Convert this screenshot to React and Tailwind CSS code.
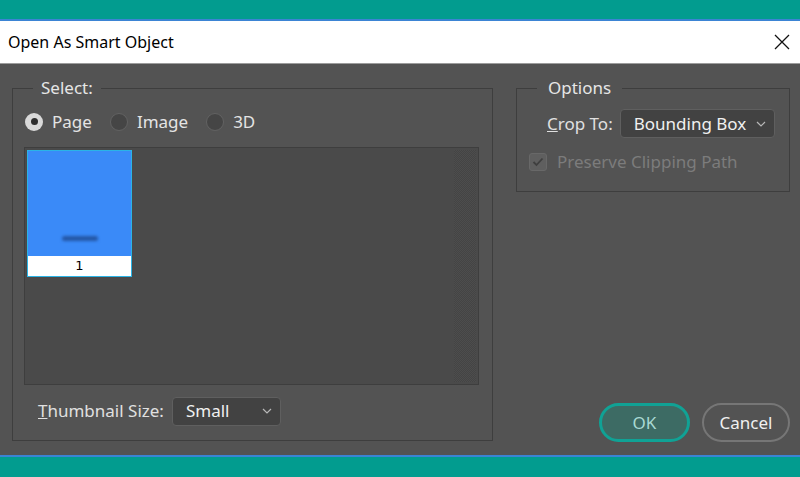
import React from 'react';

const font = { fontFamily: '"Noto Sans", "Open Sans", sans-serif' };

const Chevron = () => (
  <svg width="10" height="6" viewBox="0 0 10 6" className="text-[#b8b8b8]">
    <path d="M1 1l4 4 4-4" fill="none" stroke="currentColor" strokeWidth="1.2" />
  </svg>
);

const Radio = ({ checked, label }) => (
  <label className="flex items-center gap-[9px]">
    {checked ? (
      <span className="w-[18px] h-[18px] rounded-full bg-[#d9d9d9] flex items-center justify-center">
        <span className="w-[7px] h-[7px] rounded-full bg-[#2e2e2e]" />
      </span>
    ) : (
      <span className="w-[18px] h-[18px] rounded-full bg-[#454545] border border-[#626262]" />
    )}
    <span className="text-[17px] text-[#e4e4e4]">{label}</span>
  </label>
);

const Select = ({ value, className }) => (
  <div className={`h-[29px] flex items-center justify-between rounded-[4px] bg-[#424242] border border-[#5f5f5f] pl-[13px] pr-[8px] ${className}`}>
    <span className="text-[17px] text-[#f0f0f0]">{value}</span>
    <Chevron />
  </div>
);

export default function App() {
  return (
    <div className="w-[800px] h-[477px] flex flex-col overflow-hidden" style={font}>
      <div className="h-[19px] bg-[#029c8f]" />
      <div className="h-[2px] bg-[#3b84d4]" />

      <div className="h-[43px] bg-white flex items-center justify-between pl-[8px] pr-[10px] border-b border-[#9c9c9c]">
        <span className="text-[16px] text-black">Open As Smart Object</span>
        <svg width="16" height="16" viewBox="0 0 16 16">
          <path d="M1 1l14 14M15 1L1 15" stroke="#111" strokeWidth="1.3" />
        </svg>
      </div>

      <div className="flex-1 bg-[#535353] flex pt-[14px] pb-[14px] pl-[12px] pr-[10px] gap-[23px]">
        {/* left group */}
        <fieldset className="w-[481px] border border-[#3e3e3e] m-0 pb-[12px] flex flex-col">
          <legend className="ml-[20px] px-[8px] text-[17px] leading-[20px] text-[#e6e6e6]">Select:</legend>
          <div className="flex items-center gap-[18px] pl-[12px] mt-[11px]">
            <Radio checked label="Page" />
            <Radio label="Image" />
            <Radio label="3D" />
          </div>

          <div className="ml-[11px] mr-[13px] mt-[12px] h-[238px] bg-[#4a4a4a] border border-[#3e3e3e] flex p-[2px]">
            <div className="flex-1">
              <div className="w-[105px] h-[127px] border border-[#2ab4e6] flex flex-col">
                <div className="flex-1 bg-[#3a8af8] flex items-end justify-center pb-[15px]">
                  <div className="w-[36px] h-[5px] rounded-full bg-[#2457a6] blur-[1.5px]" />
                </div>
                <div className="h-[20px] bg-white flex items-center justify-center text-[13px] text-black leading-none" style={{ fontFamily: '"DejaVu Sans", sans-serif' }}>1</div>
              </div>
            </div>
            <div className="w-[22px] bg-[repeating-conic-gradient(#444444_0%_25%,#4d4d4d_0%_50%)] bg-[length:2px_2px]" />
          </div>

          <div className="flex items-center gap-[8px] pl-[25px] mt-[12px]">
            <span className="text-[17px] text-[#e0e0e0]"><span className="underline">T</span>humbnail Size:</span>
            <Select value="Small" className="w-[109px]" />
          </div>
        </fieldset>

        {/* right column */}
        <div className="flex-1 flex flex-col">
          <fieldset className="border border-[#3e3e3e] m-0 pb-[16px]">
            <legend className="ml-[20px] px-[11px] text-[17px] leading-[20px] text-[#e6e6e6]">Options</legend>
            <div className="flex items-center gap-[7px] pl-[30px] mt-[11px]">
              <span className="text-[17px] text-[#e0e0e0]"><span className="underline">C</span>rop To:</span>
              <Select value="Bounding Box" className="w-[155px]" />
            </div>
            <div className="flex items-center gap-[10px] pl-[12px] mt-[11px]">
              <span className="w-[18px] h-[18px] rounded-[3px] bg-[#5f5f5f] border border-[#686868] flex items-center justify-center">
                <svg width="12" height="10" viewBox="0 0 12 10">
                  <path d="M1.5 5l3 3 6-6.5" fill="none" stroke="#3f3f3f" strokeWidth="1.8" />
                </svg>
              </span>
              <span className="text-[17px] text-[#7c7c7c]">Preserve Clipping Path</span>
            </div>
          </fieldset>

          <div className="mt-auto flex justify-end gap-[12px] mb-[-1px]">
            <button className="w-[91px] h-[39px] rounded-full border-[3px] border-[#10a295] bg-[#3d6b64] text-[17px] text-[#a9d9d3]">OK</button>
            <button className="w-[88px] h-[39px] rounded-full border-2 border-[#767676] bg-[#535353] text-[17px] text-[#f0f0f0]">Cancel</button>
          </div>
        </div>
      </div>

      <div className="h-[2px] bg-[#3b84d4]" />
      <div className="h-[20px] bg-[#029c8f]" />
    </div>
  );
}
